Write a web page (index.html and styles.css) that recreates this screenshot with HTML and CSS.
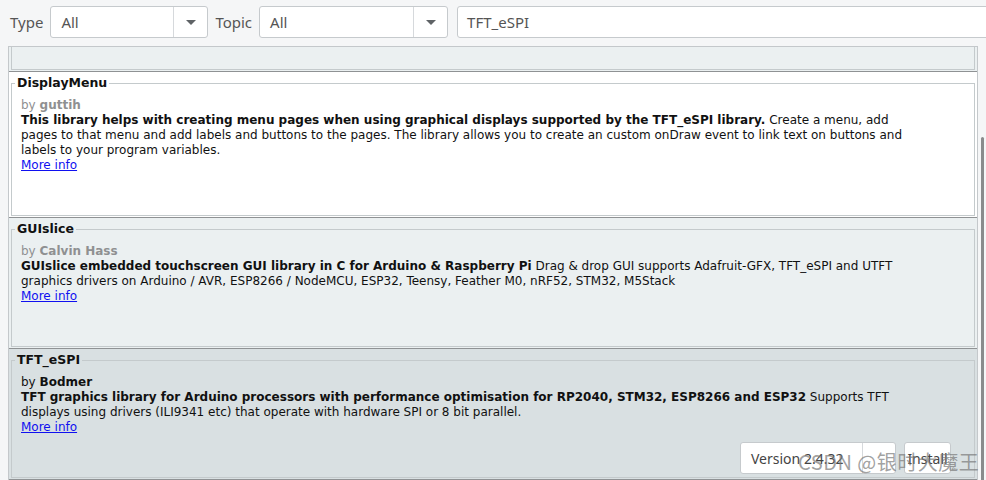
FILE: index.html
```html
<!DOCTYPE html>
<html lang="en">
<head>
  <meta charset="UTF-8">
  <title>Library Manager</title>
  <link rel="stylesheet" href="styles.css">
</head>
<body>
<div class="toolbar">
  <span class="label">Type</span>
  <div class="select type-select"><span class="value">All</span><span class="drop"><span class="arrow"></span></span></div>
  <span class="label">Topic</span>
  <div class="select topic-select"><span class="value">All</span><span class="drop"><span class="arrow"></span></span></div>
  <div class="search">TFT_eSPI</div>
</div>

<div class="list-wrap">
  <div class="list">
    <div class="item plain">
      <div class="partial-box"></div>
    </div>

    <div class="item white">
      <fieldset class="lib">
        <legend>DisplayMenu</legend>
        <div class="by muted">by <b>guttih</b></div>
        <div class="desc"><b>This library helps with creating menu pages when using graphical displays supported by the TFT_eSPI library.</b> Create a menu, add<br>pages to that menu and add labels and buttons to the pages. The library allows you to create an custom onDraw event to link text on buttons and<br>labels to your program variables.</div>
        <a class="more" href="#">More info</a>
        <div class="actions hidden">
          <div class="version"><span class="value">Version 1.0.0</span><span class="drop"></span></div>
          <div class="install">Install</div>
        </div>
      </fieldset>
    </div>

    <div class="item plain">
      <fieldset class="lib">
        <legend>GUIslice</legend>
        <div class="by muted">by <b>Calvin Hass</b></div>
        <div class="desc"><b>GUIslice embedded touchscreen GUI library in C for Arduino &amp; Raspberry Pi</b> Drag &amp; drop GUI supports Adafruit-GFX, TFT_eSPI and UTFT<br>graphics drivers on Arduino / AVR, ESP8266 / NodeMCU, ESP32, Teensy, Feather M0, nRF52, STM32, M5Stack</div>
        <a class="more" href="#">More info</a>
        <div class="actions hidden">
          <div class="version"><span class="value">Version 0.17.0</span><span class="drop"></span></div>
          <div class="install">Install</div>
        </div>
      </fieldset>
    </div>

    <div class="item selected">
      <fieldset class="lib">
        <legend>TFT_eSPI</legend>
        <div class="by">by <b>Bodmer</b></div>
        <div class="desc"><b>TFT graphics library for Arduino processors with performance optimisation for RP2040, STM32, ESP8266 and ESP32</b> Supports TFT<br>displays using drivers (ILI9341 etc) that operate with hardware SPI or 8 bit parallel.</div>
        <a class="more" href="#">More info</a>
        <div class="actions">
          <div class="version"><span class="value">Version 2.4.32</span><span class="drop"></span></div>
          <div class="install">Install</div>
        </div>
      </fieldset>
    </div>
  </div>
  <div class="scrollbar"><div class="thumb"></div></div>
</div>

<div class="watermark">CSDN @银时大魔王</div>
</body>
</html>
```

FILE: styles.css
```css
body {
  margin: 0;
  background-color: #f5f6f7;
  font-family: "DejaVu Sans", sans-serif;
  font-size: 12px;
  color: #111;
  overflow: hidden;
  height: 480px;
  position: relative;
}
.toolbar {
  display: flex;
  align-items: center;
  height: 46px;
  box-sizing: border-box;
  padding: 6px 0 8px 10px;
  font-family: "Noto Sans", sans-serif;
  font-size: 15px;
  color: #555;
}
.label {
  margin-right: 7px;
}
.select, .search, .version, .install {
  display: flex;
  align-items: center;
  height: 32px;
  box-sizing: border-box;
  background: #fff;
  border: 1px solid #c6cacd;
  border-radius: 3px;
}
.select {
  margin-right: 7px;
}
.type-select {
  width: 158px;
}
.topic-select {
  width: 189px;
  margin-right: 9px;
}
.select .value {
  flex: 1;
  padding-left: 10px;
}
.drop {
  width: 33px;
  height: 100%;
  border-left: 1px solid #d6d9dc;
  display: flex;
  align-items: center;
  justify-content: center;
}
.arrow {
  width: 0;
  height: 0;
  border-left: 5px solid transparent;
  border-right: 5px solid transparent;
  border-top: 5px solid #5f6366;
}
.search {
  flex: 1;
  padding-left: 9px;
  margin-right: -4px;
}

.list-wrap {
  display: flex;
  height: 434px;
}
.list {
  flex: 1;
  margin-left: 8px;
  border: 1px solid #c4c8cb;
  border-bottom: none;
  overflow: hidden;
}
.scrollbar {
  width: 8px;
}
.thumb {
  width: 3px;
  margin-left: 3px;
  margin-top: 91px;
  height: 360px;
  background: #8a8b8c;
  border-radius: 2px;
}

.item {
  padding: 4px 2px 1px 2px;
  border-bottom: 1px solid #8f9294;
}
.item.plain {
  background: #ebf0f1;
}
.item.white {
  background: #fff;
}
.item.selected {
  background: #d9e0e2;
}
.item:first-child {
  padding-top: 0;
}
.partial-box {
  height: 23px;
  border: 1px solid #c4cacc;
  border-top: none;
  box-sizing: border-box;
}
.lib {
  margin: 0;
  min-width: 0;
  padding: 8px 9px 0 9px;
  border: 1px solid #c4cacc;
  line-height: 15px;
}
.lib legend {
  margin-left: -6px;
  padding: 0 2px;
  font-weight: bold;
  font-size: 12.5px;
  line-height: 14px;
  color: #111;
}
.by.muted {
  color: #8f9091;
}
.desc {
  white-space: nowrap;
}
.more {
  color: #1010f0;
}
.actions {
  display: flex;
  justify-content: flex-end;
  gap: 8px;
  height: 32px;
  margin: 7px 14px 3px 0;
  font-family: "Noto Sans", sans-serif;
  font-size: 14px;
  color: #444;
}
.actions.hidden {
  visibility: hidden;
}
.version {
  width: 156px;
}
.version .value {
  flex: 1;
  padding-left: 10px;
}
.version .drop {
  width: 32px;
}
.install {
  width: 47px;
  justify-content: center;
  overflow: hidden;
}
.watermark {
  position: absolute;
  left: 798px;
  top: 447px;
  font-family: "Noto Sans CJK SC", sans-serif;
  font-size: 20px;
  color: rgba(120, 120, 120, 0.7);
  letter-spacing: 0.5px;
}
```
